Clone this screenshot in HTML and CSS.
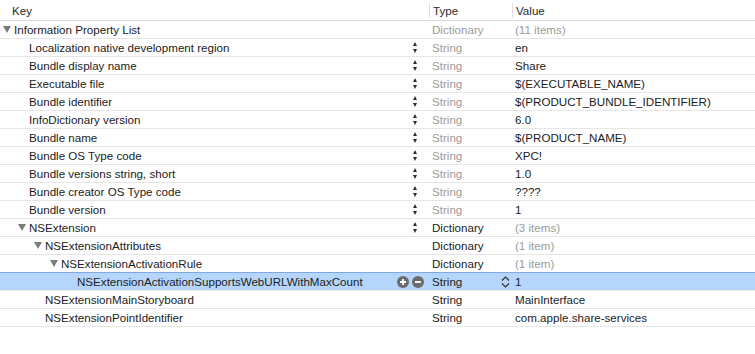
FILE: index.html
```html
<!DOCTYPE html>
<html lang="en">
<head>
    <meta charset="UTF-8">
    <title>Info.plist</title>
    <link rel="stylesheet" href="styles.css">
</head>
<body>
    <div class="plist">
        <!-- header -->
        <div class="row head">
            <div class="cell key">Key</div>
            <div class="cell type">Type</div>
            <div class="cell value">Value</div>
        </div>

        <div class="row">
            <div class="cell key lv0"><span class="tri"></span><span class="label">Information Property List</span></div>
            <div class="cell type dim">Dictionary</div>
            <div class="cell value dim">(11 items)</div>
        </div>
        <div class="row">
            <div class="cell key lv1"><span class="label">Localization native development region</span><span class="sort"></span></div>
            <div class="cell type dim">String</div>
            <div class="cell value">en</div>
        </div>
        <div class="row">
            <div class="cell key lv1"><span class="label">Bundle display name</span><span class="sort"></span></div>
            <div class="cell type dim">String</div>
            <div class="cell value">Share</div>
        </div>
        <div class="row">
            <div class="cell key lv1"><span class="label">Executable file</span><span class="sort"></span></div>
            <div class="cell type dim">String</div>
            <div class="cell value">$(EXECUTABLE_NAME)</div>
        </div>
        <div class="row">
            <div class="cell key lv1"><span class="label">Bundle identifier</span><span class="sort"></span></div>
            <div class="cell type dim">String</div>
            <div class="cell value">$(PRODUCT_BUNDLE_IDENTIFIER)</div>
        </div>
        <div class="row">
            <div class="cell key lv1"><span class="label">InfoDictionary version</span><span class="sort"></span></div>
            <div class="cell type dim">String</div>
            <div class="cell value">6.0</div>
        </div>
        <div class="row">
            <div class="cell key lv1"><span class="label">Bundle name</span><span class="sort"></span></div>
            <div class="cell type dim">String</div>
            <div class="cell value">$(PRODUCT_NAME)</div>
        </div>
        <div class="row">
            <div class="cell key lv1"><span class="label">Bundle OS Type code</span><span class="sort"></span></div>
            <div class="cell type dim">String</div>
            <div class="cell value">XPC!</div>
        </div>
        <div class="row">
            <div class="cell key lv1"><span class="label">Bundle versions string, short</span><span class="sort"></span></div>
            <div class="cell type dim">String</div>
            <div class="cell value">1.0</div>
        </div>
        <div class="row">
            <div class="cell key lv1"><span class="label">Bundle creator OS Type code</span><span class="sort"></span></div>
            <div class="cell type dim">String</div>
            <div class="cell value">????</div>
        </div>
        <div class="row">
            <div class="cell key lv1"><span class="label">Bundle version</span><span class="sort"></span></div>
            <div class="cell type dim">String</div>
            <div class="cell value">1</div>
        </div>
        <div class="row">
            <div class="cell key lv1"><span class="tri"></span><span class="label">NSExtension</span><span class="sort"></span></div>
            <div class="cell type">Dictionary</div>
            <div class="cell value dim">(3 items)</div>
        </div>
        <div class="row">
            <div class="cell key lv2"><span class="tri"></span><span class="label">NSExtensionAttributes</span></div>
            <div class="cell type">Dictionary</div>
            <div class="cell value dim">(1 item)</div>
        </div>
        <div class="row">
            <div class="cell key lv3"><span class="tri"></span><span class="label">NSExtensionActivationRule</span></div>
            <div class="cell type">Dictionary</div>
            <div class="cell value dim">(1 item)</div>
        </div>
        <div class="row selected">
            <div class="cell key lv4">
                <span class="label">NSExtensionActivationSupportsWebURLWithMaxCount</span>
                <span class="btns">
                    <span class="circle-btn">
                        <svg width="12" height="12" viewBox="0 0 12 12"><circle cx="6" cy="6" r="6" fill="#6b6b6b"/><path d="M6 3v6M3 6h6" stroke="#fff" stroke-width="1.8"/></svg>
                    </span>
                    <span class="circle-btn">
                        <svg width="12" height="12" viewBox="0 0 12 12"><circle cx="6" cy="6" r="6" fill="#6b6b6b"/><path d="M3 6h6" stroke="#fff" stroke-width="1.8"/></svg>
                    </span>
                </span>
            </div>
            <div class="cell type">
                <span>String</span>
                <svg class="chev" width="9" height="14" viewBox="0 0 9 14"><path d="M1 5.5L4.5 2 8 5.5M1 8.5L4.5 12 8 8.5" fill="none" stroke="#333" stroke-width="1.2"/></svg>
            </div>
            <div class="cell value">1</div>
        </div>
        <div class="row">
            <div class="cell key lv2"><span class="label">NSExtensionMainStoryboard</span></div>
            <div class="cell type">String</div>
            <div class="cell value">MainInterface</div>
        </div>
        <div class="row">
            <div class="cell key lv2"><span class="label">NSExtensionPointIdentifier</span></div>
            <div class="cell type">String</div>
            <div class="cell value">com.apple.share-services</div>
        </div>
    </div>
</body>
</html>
```

FILE: styles.css
```css
* {
    margin: 0;
    padding: 0;
    box-sizing: border-box;
}

body {
    font-family: 'Liberation Sans', Arial, sans-serif;
    font-size: 11.6px;
    color: #1c1c1c;
    background-color: #fff;
    width: 755px;
    height: 354px;
    overflow: hidden;
}

.row {
    display: grid;
    grid-template-columns: 429px 83px 1fr;
    height: 18px;
    border-bottom: 1px solid #e6e6e6;
    align-items: center;
}

/* header */
.row.head {
    height: 21px;
    border-bottom: 1px solid #d9d9d9;
    color: #2b2b2b;
}

.row.head .key {
    padding-left: 12px;
}

.row.head .type,
.row.head .value {
    border-left: 1px solid #dedede;
    height: 15px;
    line-height: 15px;
}

.cell {
    display: flex;
    align-items: center;
    height: 100%;
    white-space: nowrap;
}

.cell.type {
    padding-left: 3px;
    padding-right: 2px;
    justify-content: space-between;
}

.cell.value {
    padding-left: 3px;
}

.dim {
    color: #9b9b9b;
}

/* indentation */
.key.lv0 { padding-left: 3px; }
.key.lv1 { padding-left: 29px; }
.key.lv1 .tri { margin-left: -11px; }
.key.lv2 { padding-left: 45px; }
.key.lv2 .tri { margin-left: -11px; }
.key.lv3 { padding-left: 61px; }
.key.lv3 .tri { margin-left: -11px; }
.key.lv4 { padding-left: 77px; }

.key {
    padding-right: 5px;
}

.label {
    flex: 1;
}

/* disclosure triangle */
.tri {
    width: 0;
    height: 0;
    border-left: 4px solid transparent;
    border-right: 4px solid transparent;
    border-top: 7px solid #7c7c7c;
    margin-right: 3px;
}

/* sort arrows */
.sort {
    width: 7px;
    height: 11px;
    margin-right: 5px;
    position: relative;
}

.sort::before,
.sort::after {
    content: '';
    position: absolute;
    left: 1px;
    border-left: 2.5px solid transparent;
    border-right: 2.5px solid transparent;
}

.sort::before {
    top: 0;
    border-bottom: 4px solid #2e2e2e;
}

.sort::after {
    bottom: 0;
    border-top: 4px solid #2e2e2e;
}

/* selected row */
.row.selected {
    background-color: #b5d5fb;
    border-top: 1px solid #7fa9e2;
    margin-top: -1px;
    height: 19px;
}

.btns {
    display: flex;
    gap: 3px;
}

.circle-btn {
    display: flex;
}

.chev {
    margin-top: 1px;
}
```
